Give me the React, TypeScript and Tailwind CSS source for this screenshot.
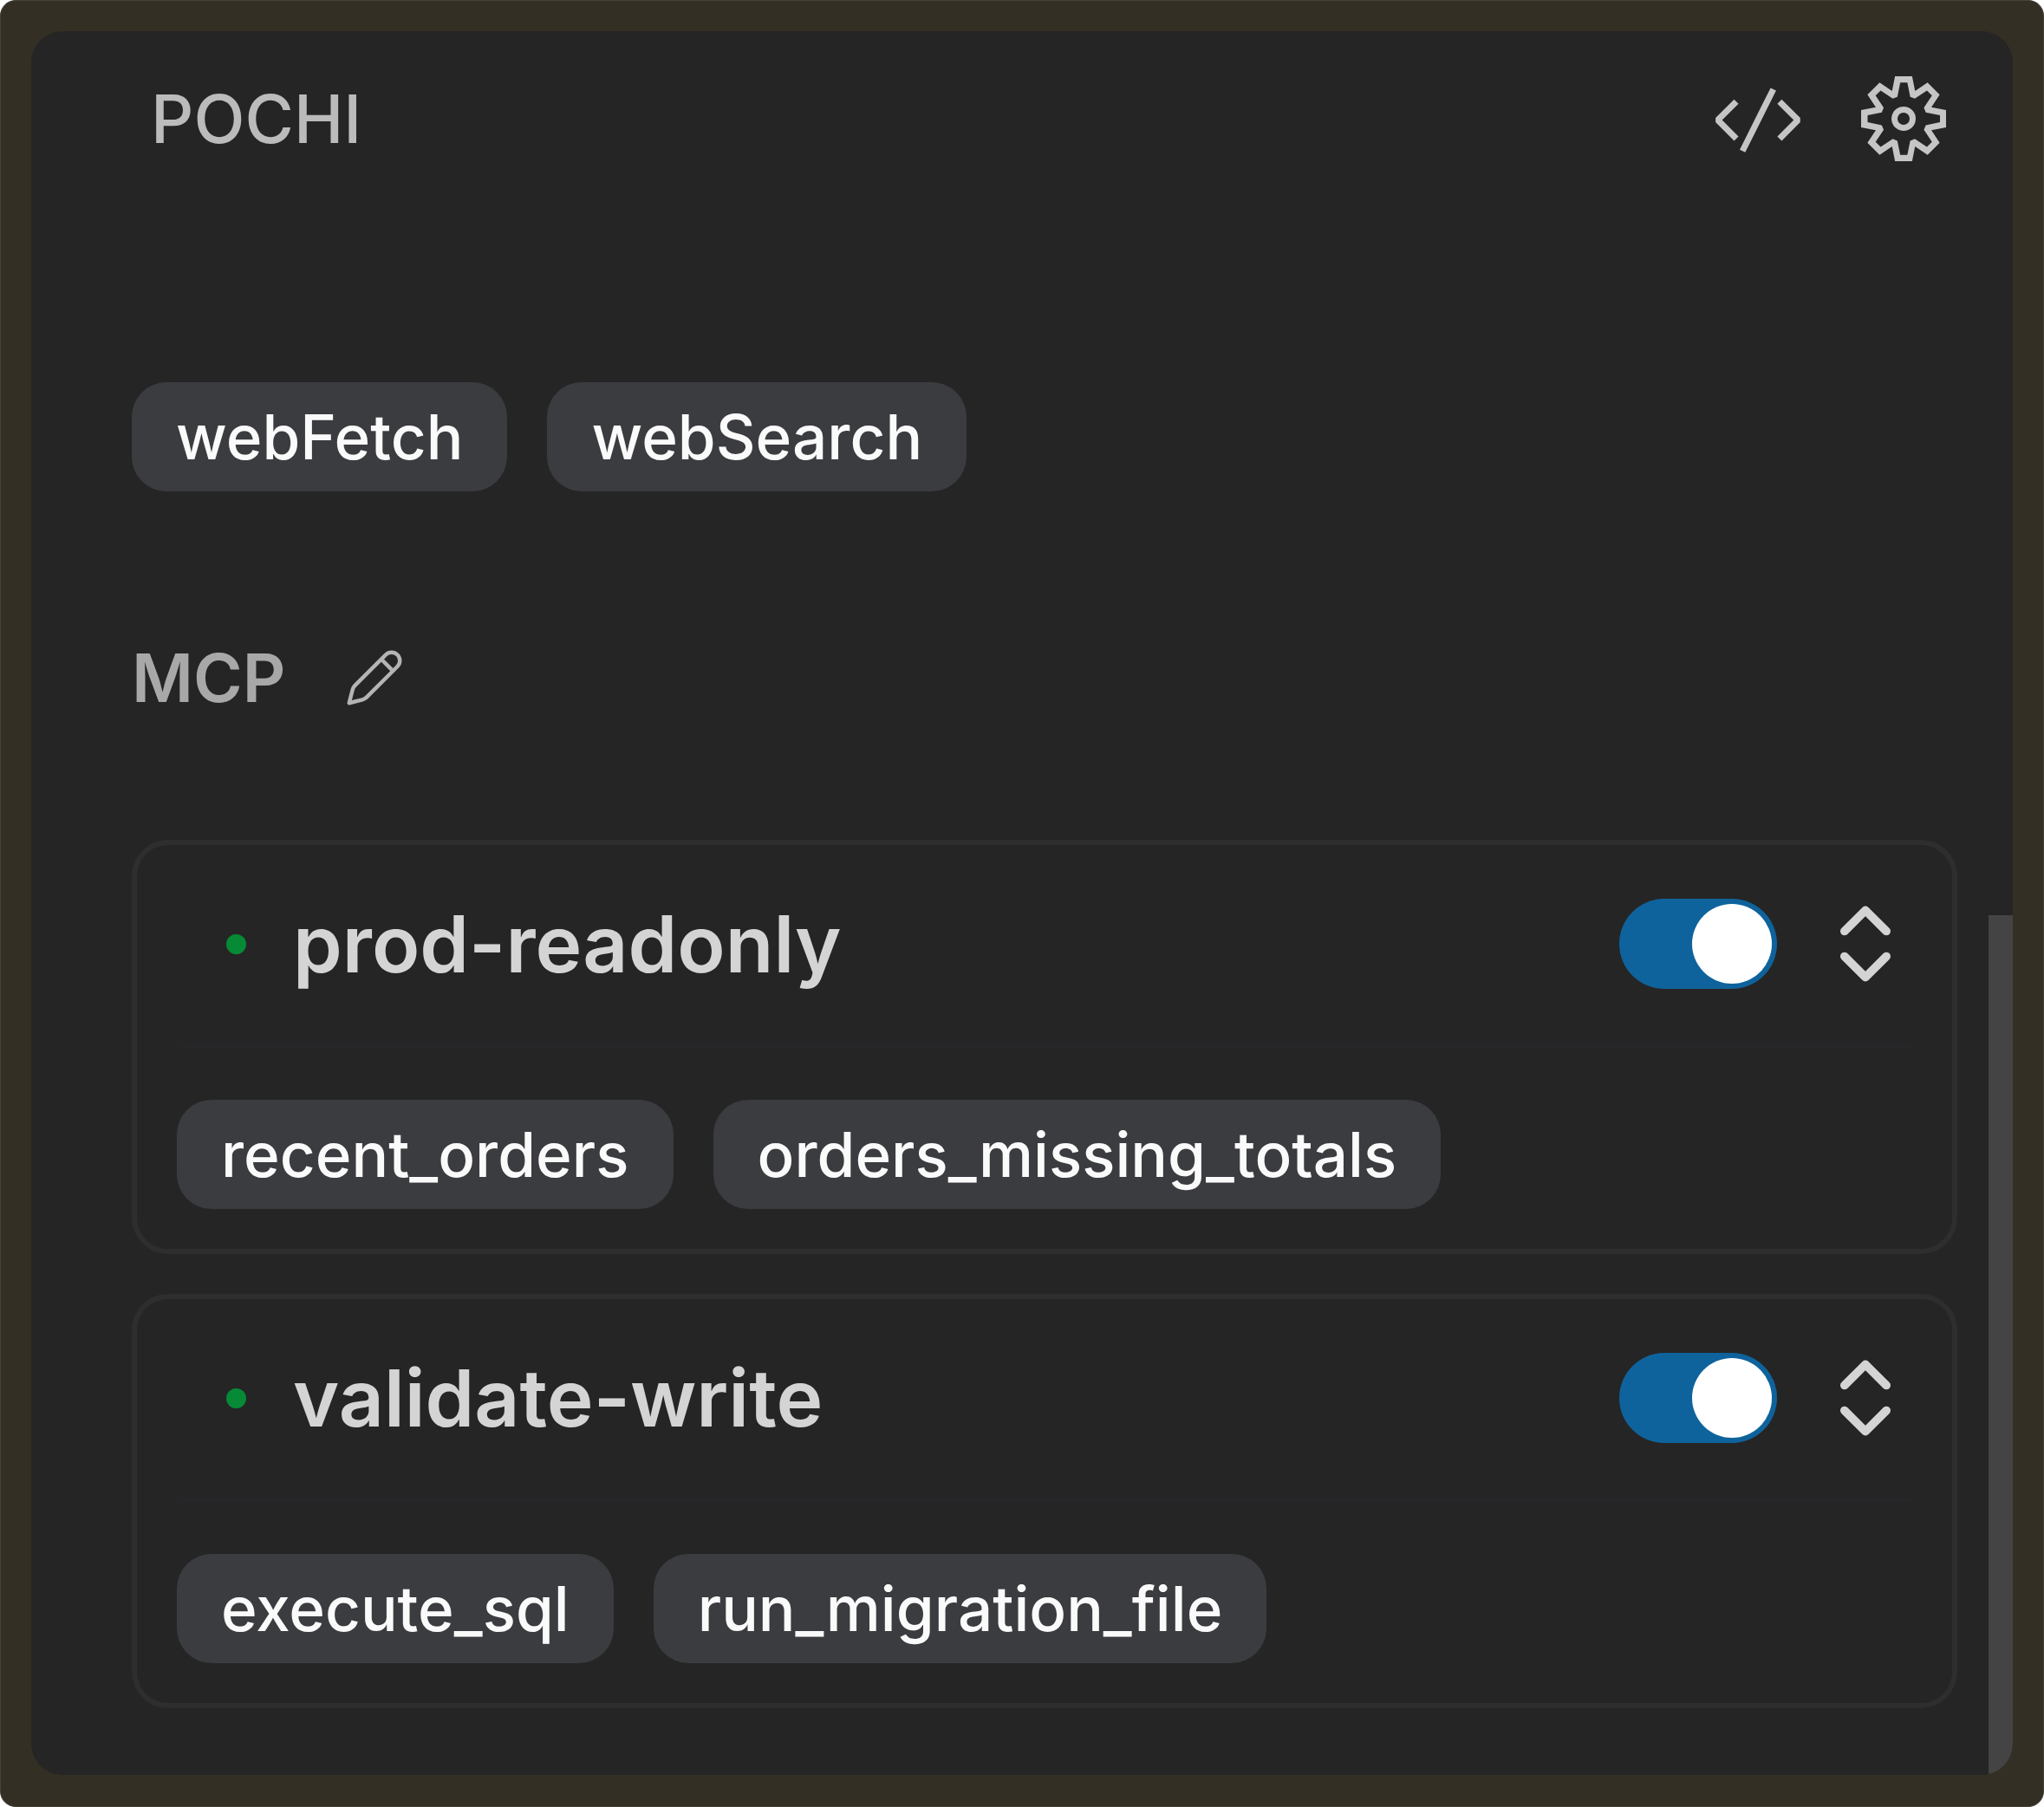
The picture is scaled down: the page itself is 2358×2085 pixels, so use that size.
import { useState } from 'react';
import { ChevronsUpDown } from 'lucide-react';
import { VscCode, VscSettingsGear } from 'react-icons/vsc';

interface McpServer {
  name: string;
  tools: string[];
}

const builtInTools = ['webFetch', 'webSearch'];

const servers: McpServer[] = [
  { name: 'prod-readonly', tools: ['recent_orders', 'orders_missing_totals'] },
  { name: 'validate-write', tools: ['execute_sql', 'run_migration_file'] },
];

function PencilIcon({ className }: { className?: string }) {
  return (
    <svg viewBox="0 0 16 16" fill="currentColor" className={className} aria-hidden="true">
      <path d="M14.236 1.764C13.212.74 11.553.74 10.529 1.764L2.657 9.635a2.95 2.95 0 0 0-.772 1.355l-.869 3.386a.5.5 0 0 0 .608.608l3.386-.869a2.95 2.95 0 0 0 1.355-.772l7.871-7.872c1.024-1.024 1.024-2.683 0-3.707Zm-3 .707a1.621 1.621 0 0 1 2.293 2.293l-.779.779-2.293-2.293.779-.779ZM9.75 3.957l2.293 2.293-6.386 6.385a1.95 1.95 0 0 1-.897.512l-2.566.658.659-2.566c.087-.339.264-.649.511-.897L9.75 3.957Z" />
    </svg>
  );
}

function ToolList({ tools }: { tools: string[] }) {
  return (
    <ul className="flex flex-wrap gap-[46px]">
      {tools.map((tool) => (
        <li
          key={tool}
          className="flex h-[126px] items-center rounded-[40px] bg-[#3b3c40] px-[51px] text-[71px] font-medium leading-none text-[#fafafa]"
        >
          {tool}
        </li>
      ))}
    </ul>
  );
}

function ServerCard({ server }: { server: McpServer }) {
  const [enabled, setEnabled] = useState(true);
  const [open, setOpen] = useState(true);

  return (
    <section className="rounded-[42px] border-[6px] border-[#2e2e2e] pb-[46px] pl-[46px] pr-[42px]">
      <div className="box-content flex h-[228px] items-center border-b-[6px] border-[#262628] pl-[57px]">
        <span
          className={`size-[23px] shrink-0 rounded-full ${enabled ? 'bg-[#068a36]' : 'bg-[#555555]'}`}
        />
        <h3 className="ml-[54px] flex-1 text-[91px] font-semibold leading-none text-[#d4d4d4]">
          {server.name}
        </h3>
        <input
          type="checkbox"
          role="switch"
          aria-label={server.name}
          checked={enabled}
          onChange={(e) => setEnabled(e.target.checked)}
          className="flex h-[104px] w-[182px] shrink-0 appearance-none items-center rounded-full bg-[#444444] p-[6px] before:size-[92px] before:rounded-full before:bg-white checked:justify-end checked:bg-[#0f639c]"
        />
        <button
          onClick={() => setOpen(!open)}
          aria-label="Toggle tools"
          aria-expanded={open}
          className="ml-[44px] shrink-0 text-[#d4d4d4]"
        >
          <ChevronsUpDown className="size-[116px]" />
        </button>
      </div>
      {open && (
        <div className="pt-[60px]">
          <ToolList tools={server.tools} />
        </div>
      )}
    </section>
  );
}

export default function App() {
  return (
    <div className="flex min-h-screen flex-col rounded-[18px] border border-[#45423a] bg-[#342f24] p-[35px] pb-9 font-['Inter',sans-serif]">
      <div className="relative flex-1 overflow-hidden rounded-[36px] bg-[#252525]">
        {/* Panel title bar */}
        <header className="flex h-[202px] items-center justify-between pl-[138px] pr-[77px]">
          <h1 className="text-[77px] font-medium leading-none text-[#bbbbbb]">POCHI</h1>
          <div className="flex items-center gap-[61px] text-[#c5c5c5]">
            <button aria-label="Open in editor">
              <VscCode className="size-[114px]" />
            </button>
            <button aria-label="Settings">
              <VscSettingsGear className="size-[98px]" />
            </button>
          </div>
        </header>

        <main className="pb-[75px] pl-[116px] pr-[64px] pt-[203px]">
          <ToolList tools={builtInTools} />

          {/* MCP servers */}
          <div className="mt-[165px] flex h-[100px] items-center gap-[67px]">
            <h2 className="text-[77px] font-semibold leading-none text-[#a8a8a8]">MCP</h2>
            <button aria-label="Edit MCP settings" className="text-[#b4b4b4]">
              <PencilIcon className="size-[72px]" />
            </button>
          </div>

          <div className="mt-[137px] flex flex-col gap-[46px]">
            {servers.map((server) => (
              <ServerCard key={server.name} server={server} />
            ))}
          </div>
        </main>

        {/* Scrollbar thumb */}
        <div className="absolute bottom-0 right-0 h-[992px] w-7 bg-[#444444]" />
      </div>
    </div>
  );
}
